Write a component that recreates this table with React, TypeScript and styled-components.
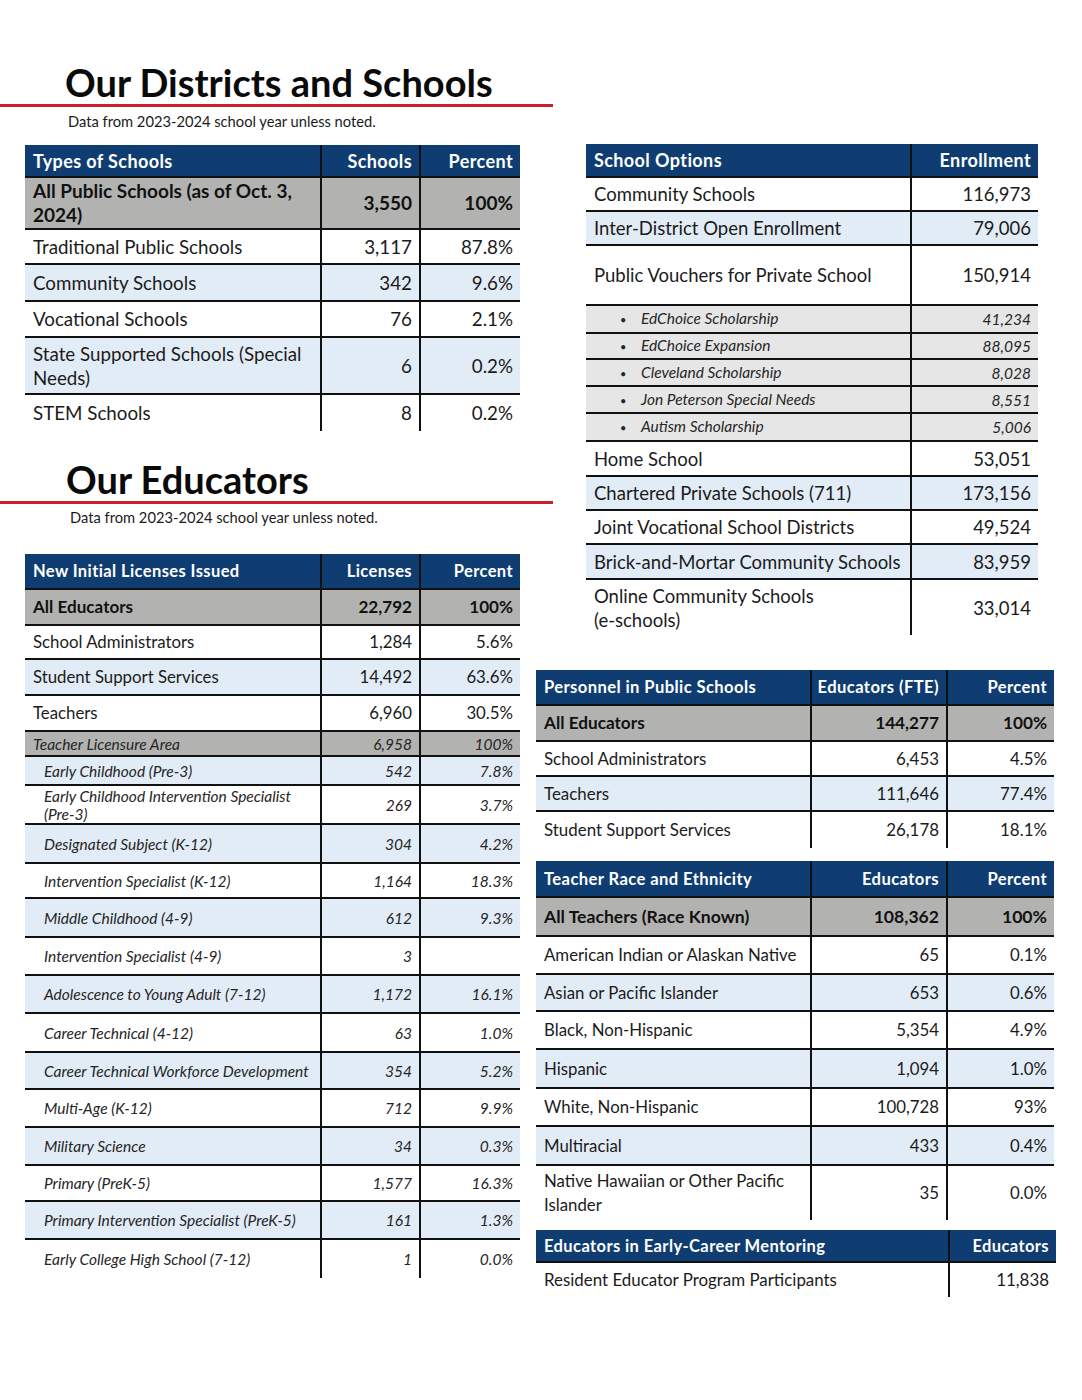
import React from 'react';
import styled, { createGlobalStyle, css } from 'styled-components';

const GlobalStyle = createGlobalStyle`
  html, body { margin: 0; padding: 0; background: #ffffff; }
  body { font-family: Lato, "Noto Sans", sans-serif; color: #1b1b1b; }
  * { box-sizing: border-box; }
`;

type Variant = 'head' | 'total' | 'plain' | 'alt' | 'sub' | 'area' | 'item' | 'itemAlt';

interface RowData {
  cells: string[];
  v: Variant;
  h: number;
}

interface Sizes {
  body: number;
  bold: number;
  head: number;
}

const NAVY = '#0f3d72';
const GRAY = '#b2b3b1';
const BLUE = '#e2ecf6';
const SUBGRAY = '#e6e6e6';
const LINE = '#111111';

const Page = styled.div`
  width: 1082px;
  min-height: 1400px;
  display: flex;
  align-items: flex-start;
`;

const LeftCol = styled.div`
  width: 536px;
  padding-top: 60px;
  display: flex;
  flex-direction: column;
`;

const RightCol = styled.div`
  width: 520px;
  padding-top: 144px;
  display: flex;
  flex-direction: column;
`;

const Title = styled.h1<{ $indent: number; $top: number }>`
  margin: ${(p) => p.$top}px 0 0 0;
  width: 553px;
  padding-left: ${(p) => p.$indent}px;
  font-size: 38px;
  line-height: 44px;
  font-weight: 700;
  color: #0a0a0a;
  border-bottom: 3px solid #c8202f;
  white-space: nowrap;
`;

const Subtitle = styled.p<{ $indent: number; $top: number }>`
  margin: ${(p) => p.$top}px 0 0 0;
  padding-left: ${(p) => p.$indent}px;
  font-size: 14.7px;
  line-height: 20px;
  color: #1b1b1b;
`;

const TableBox = styled.div<{ $width: number; $left: number; $top: number }>`
  width: ${(p) => p.$width}px;
  margin-left: ${(p) => p.$left}px;
  margin-top: ${(p) => p.$top}px;
  display: flex;
  flex-direction: column;
`;

const bgFor = (v: Variant) => {
  switch (v) {
    case 'head':
      return NAVY;
    case 'total':
    case 'area':
      return GRAY;
    case 'alt':
    case 'itemAlt':
      return BLUE;
    case 'sub':
      return SUBGRAY;
    default:
      return '#ffffff';
  }
};

const Row = styled.div<{
  $cols: string;
  $h: number;
  $v: Variant;
  $last: boolean;
  $sizes: Sizes;
}>`
  display: grid;
  grid-template-columns: ${(p) => p.$cols};
  height: ${(p) => p.$h}px;
  background: ${(p) => bgFor(p.$v)};
  border-bottom: ${(p) => (p.$last ? 'none' : `2px solid ${LINE}`)};
  font-size: ${(p) => p.$sizes.body}px;
  line-height: 24px;
  ${(p) =>
    p.$v === 'head' &&
    css`
      color: #ffffff;
      font-weight: 700;
      font-size: ${p.$sizes.head}px;
      letter-spacing: 0.4px;
    `}
  ${(p) =>
    p.$v === 'total' &&
    css`
      font-weight: 700;
      font-size: ${p.$sizes.bold}px;
      color: #111;
    `}
  ${(p) =>
    (p.$v === 'sub' || p.$v === 'area' || p.$v === 'item' || p.$v === 'itemAlt') &&
    css`
      font-style: italic;
      font-size: 15.5px;
      line-height: 18px;
      color: #262626;
    `}
`;

const Cell = styled.div<{ $right: boolean; $indent: number }>`
  display: flex;
  align-items: center;
  justify-content: ${(p) => (p.$right ? 'flex-end' : 'flex-start')};
  text-align: ${(p) => (p.$right ? 'right' : 'left')};
  padding: 0 7px 0 ${(p) => p.$indent}px;
  border-right: 2px solid ${LINE};
  white-space: pre;
  &:last-child {
    border-right: none;
  }
`;

const Bullet = styled.span`
  display: inline-block;
  width: 21px;
  margin-left: 26px;
  font-style: normal;
  font-size: 11px;
`;

const indentFor = (v: Variant) => (v === 'item' || v === 'itemAlt' ? 19 : 8);

const DataTable: React.FC<{
  cols: number[];
  rows: RowData[];
  left: number;
  top: number;
  sizes: Sizes;
}> = ({ cols, rows, left, top, sizes }) => {
  const width = cols.reduce((a, b) => a + b, 0);
  const template = cols.map((c) => `${c}px`).join(' ');
  return (
    <TableBox $width={width} $left={left} $top={top}>
      {rows.map((r, i) => (
        <Row
          key={i}
          $cols={template}
          $h={r.h}
          $v={r.v}
          $last={i === rows.length - 1}
          $sizes={sizes}
        >
          {r.cells.map((c, j) => (
            <Cell key={j} $right={j > 0} $indent={j === 0 ? indentFor(r.v) : 8}>
              {j === 0 && r.v === 'sub' ? (
                <span>
                  <Bullet>•</Bullet>
                  {c}
                </span>
              ) : (
                c
              )}
            </Cell>
          ))}
        </Row>
      ))}
    </TableBox>
  );
};

const schools: RowData[] = [
  { cells: ['Types of Schools', 'Schools', 'Percent'], v: 'head', h: 33 },
  { cells: ['All Public Schools (as of Oct. 3,\n2024)', '3,550', '100%'], v: 'total', h: 52 },
  { cells: ['Traditional Public Schools', '3,117', '87.8%'], v: 'plain', h: 35 },
  { cells: ['Community Schools', '342', '9.6%'], v: 'alt', h: 37 },
  { cells: ['Vocational Schools', '76', '2.1%'], v: 'plain', h: 36 },
  { cells: ['State Supported Schools (Special\nNeeds)', '6', '0.2%'], v: 'alt', h: 57 },
  { cells: ['STEM Schools', '8', '0.2%'], v: 'plain', h: 36 },
];

const licenses: RowData[] = [
  { cells: ['New Initial Licenses Issued', 'Licenses', 'Percent'], v: 'head', h: 36 },
  { cells: ['All Educators', '22,792', '100%'], v: 'total', h: 36 },
  { cells: ['School Administrators', '1,284', '5.6%'], v: 'plain', h: 34 },
  { cells: ['Student Support Services', '14,492', '63.6%'], v: 'alt', h: 36 },
  { cells: ['Teachers', '6,960', '30.5%'], v: 'plain', h: 36 },
  { cells: ['Teacher Licensure Area', '6,958', '100%'], v: 'area', h: 25 },
  { cells: ['Early Childhood (Pre-3)', '542', '7.8%'], v: 'itemAlt', h: 29 },
  { cells: ['Early Childhood Intervention Specialist\n(Pre-3)', '269', '3.7%'], v: 'item', h: 39 },
  { cells: ['Designated Subject (K-12)', '304', '4.2%'], v: 'itemAlt', h: 39 },
  { cells: ['Intervention Specialist (K-12)', '1,164', '18.3%'], v: 'item', h: 35 },
  { cells: ['Middle Childhood (4-9)', '612', '9.3%'], v: 'itemAlt', h: 39 },
  { cells: ['Intervention Specialist (4-9)', '3', ''], v: 'item', h: 38 },
  { cells: ['Adolescence to Young Adult (7-12)', '1,172', '16.1%'], v: 'itemAlt', h: 38 },
  { cells: ['Career Technical (4-12)', '63', '1.0%'], v: 'item', h: 39 },
  { cells: ['Career Technical Workforce Development', '354', '5.2%'], v: 'itemAlt', h: 37 },
  { cells: ['Multi-Age (K-12)', '712', '9.9%'], v: 'item', h: 38 },
  { cells: ['Military Science', '34', '0.3%'], v: 'itemAlt', h: 38 },
  { cells: ['Primary (PreK-5)', '1,577', '16.3%'], v: 'item', h: 36 },
  { cells: ['Primary Intervention Specialist (PreK-5)', '161', '1.3%'], v: 'itemAlt', h: 38 },
  { cells: ['Early College High School (7-12)', '1', '0.0%'], v: 'item', h: 38 },
];

const options: RowData[] = [
  { cells: ['School Options', 'Enrollment'], v: 'head', h: 34 },
  { cells: ['Community Schools', '116,973'], v: 'plain', h: 34 },
  { cells: ['Inter-District Open Enrollment', '79,006'], v: 'alt', h: 34 },
  { cells: ['Public Vouchers for Private School', '150,914'], v: 'plain', h: 60 },
  { cells: ['EdChoice Scholarship', '41,234'], v: 'sub', h: 28 },
  { cells: ['EdChoice Expansion', '88,095'], v: 'sub', h: 26 },
  { cells: ['Cleveland Scholarship', '8,028'], v: 'sub', h: 27 },
  { cells: ['Jon Peterson Special Needs', '8,551'], v: 'sub', h: 27 },
  { cells: ['Autism Scholarship', '5,006'], v: 'sub', h: 28 },
  { cells: ['Home School', '53,051'], v: 'plain', h: 35 },
  { cells: ['Chartered Private Schools (711)', '173,156'], v: 'alt', h: 34 },
  { cells: ['Joint Vocational School Districts', '49,524'], v: 'plain', h: 34 },
  { cells: ['Brick-and-Mortar Community Schools', '83,959'], v: 'alt', h: 35 },
  { cells: ['Online Community Schools\n(e-schools)', '33,014'], v: 'plain', h: 55 },
];

const personnel: RowData[] = [
  { cells: ['Personnel in Public Schools', 'Educators (FTE)', 'Percent'], v: 'head', h: 36 },
  { cells: ['All Educators', '144,277', '100%'], v: 'total', h: 36 },
  { cells: ['School Administrators', '6,453', '4.5%'], v: 'plain', h: 35 },
  { cells: ['Teachers', '111,646', '77.4%'], v: 'alt', h: 35 },
  { cells: ['Student Support Services', '26,178', '18.1%'], v: 'plain', h: 36 },
];

const race: RowData[] = [
  { cells: ['Teacher Race and Ethnicity', 'Educators', 'Percent'], v: 'head', h: 37 },
  { cells: ['All Teachers (Race Known)', '108,362', '100%'], v: 'total', h: 39 },
  { cells: ['American Indian or Alaskan Native', '65', '0.1%'], v: 'plain', h: 38 },
  { cells: ['Asian or Pacific Islander', '653', '0.6%'], v: 'alt', h: 37 },
  { cells: ['Black, Non-Hispanic', '5,354', '4.9%'], v: 'plain', h: 38 },
  { cells: ['Hispanic', '1,094', '1.0%'], v: 'alt', h: 39 },
  { cells: ['White, Non-Hispanic', '100,728', '93%'], v: 'plain', h: 38 },
  { cells: ['Multiracial', '433', '0.4%'], v: 'alt', h: 39 },
  { cells: ['Native Hawaiian or Other Pacific\nIslander', '35', '0.0%'], v: 'plain', h: 54 },
];

const mentoring: RowData[] = [
  { cells: ['Educators in Early-Career Mentoring', 'Educators'], v: 'head', h: 33 },
  { cells: ['Resident Educator Program Participants', '11,838'], v: 'plain', h: 34 },
];

export default function App() {
  return (
    <>
      <GlobalStyle />
      <Page>
        <LeftCol>
          <Title $indent={65} $top={0}>Our Districts and Schools</Title>
          <Subtitle $indent={68} $top={4}>Data from 2023-2024 school year unless noted.</Subtitle>
          <DataTable
            cols={[297, 99, 99]}
            rows={schools}
            left={25}
            top={14}
            sizes={{ body: 18.75, bold: 19, head: 18 }}
          />
          <Title $indent={66} $top={26}>Our Educators</Title>
          <Subtitle $indent={70} $top={3}>Data from 2023-2024 school year unless noted.</Subtitle>
          <DataTable
            cols={[297, 99, 99]}
            rows={licenses}
            left={25}
            top={27}
            sizes={{ body: 16.8, bold: 17.1, head: 16.5 }}
          />
        </LeftCol>
        <RightCol>
          <DataTable
            cols={[326, 126]}
            rows={options}
            left={50}
            top={0}
            sizes={{ body: 18.5, bold: 18, head: 18 }}
          />
          <DataTable
            cols={[276, 136, 106]}
            rows={personnel}
            left={0}
            top={35}
            sizes={{ body: 16.9, bold: 17.2, head: 16.6 }}
          />
          <DataTable
            cols={[276, 136, 106]}
            rows={race}
            left={0}
            top={13}
            sizes={{ body: 16.8, bold: 17.6, head: 16.6 }}
          />
          <DataTable
            cols={[414, 106]}
            rows={mentoring}
            left={0}
            top={10}
            sizes={{ body: 16.9, bold: 17.2, head: 16.5 }}
          />
        </RightCol>
      </Page>
    </>
  );
}
